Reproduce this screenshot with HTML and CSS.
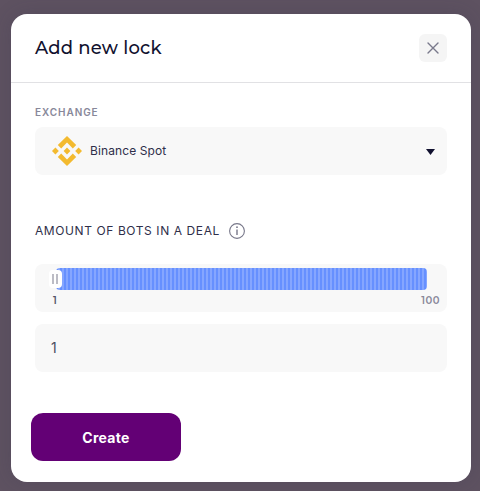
FILE: index.html
```html
<!DOCTYPE html>
<html lang="en">

<head>
    <meta charset="UTF-8">
    <meta name="viewport" content="width=device-width, initial-scale=1.0">
    <title>Add new lock</title>
    <link rel="stylesheet" href="styles.css">
</head>

<body>

    <div class="modal">
        <div class="modal-header">
            <h2 class="modal-title">Add new lock</h2>
            <button class="close-btn" type="button" aria-label="Close">
                <svg width="12" height="12" viewBox="0 0 12 12">
                    <path d="M1 1l10 10M11 1L1 11" fill="none" stroke="#79798c" stroke-width="1.4" stroke-linecap="round" />
                </svg>
            </button>
        </div>

        <div class="modal-body">
            <div class="field-label">Exchange</div>
            <div class="select">
                <svg class="coin-icon" width="30" height="30" viewBox="0 0 30 30" fill="#f3ba2f">
                    <path d="M9.2 12.4L15 6.6l5.8 5.8 3.4-3.4L15 0 5.8 9z" />
                    <path d="M0 15l3.4-3.4L6.8 15l-3.4 3.4z" />
                    <path d="M9.2 17.6l5.8 5.8 5.8-5.8 3.4 3.4L15 30l-9.2-9z" />
                    <path d="M23.2 15l3.4-3.4L30 15l-3.4 3.4z" />
                    <path d="M11.6 15l3.4-3.4 3.4 3.4-3.4 3.4z" />
                </svg>
                <span class="select-value">Binance Spot</span>
                <svg class="select-arrow" width="9" height="6" viewBox="0 0 9 6">
                    <path d="M0 0h9L4.5 6z" fill="#11112f" />
                </svg>
            </div>

            <div class="bots-title">
                <span class="bots-text">Amount of bots in a deal</span>
                <svg width="16" height="16" viewBox="0 0 16 16">
                    <circle cx="8" cy="8" r="7.4" fill="none" stroke="#777789" stroke-width="1.1" />
                    <path d="M8 6.5V12" stroke="#777789" stroke-width="1.4" />
                    <circle cx="8" cy="4.2" r="0.9" fill="#777789" />
                </svg>
            </div>

            <div class="slider">
                <div class="slider-track">
                    <span class="slider-handle"></span>
                </div>
                <div class="slider-labels">
                    <span class="current">1</span>
                    <span>100</span>
                </div>
            </div>

            <input class="amount-input" type="text" value="1" aria-label="Amount of bots">
        </div>

        <button class="create-btn" type="button">Create</button>
    </div>

</body>

</html>
```

FILE: styles.css
```css
* {
    box-sizing: border-box;
}

body {
    margin: 0;
    padding: 14px 9px 9px 11px;
    height: 491px;
    overflow: hidden;
    background-color: #5e5261;
    font-family: Inter, sans-serif;
    color: #2f2f4a;
}

.modal {
    height: 468px;
    background-color: #fff;
    border-radius: 16px;
    box-shadow: 0 0 20px rgba(50, 50, 75, 0.2);
}

.modal-header {
    display: flex;
    justify-content: space-between;
    align-items: center;
    height: 69px;
    padding: 0 24px;
    border-bottom: 1px solid #e1e1e4;
}

.modal-title {
    margin: 0;
    font-family: Montserrat, Inter, sans-serif;
    font-size: 18px;
    font-weight: 500;
    letter-spacing: 0.2px;
    color: #11112f;
}

.close-btn {
    display: flex;
    justify-content: center;
    align-items: center;
    width: 28px;
    height: 28px;
    padding: 0;
    border: none;
    border-radius: 6px;
    background-color: #f5f5f5;
    cursor: pointer;
}

.modal-body {
    padding: 23px 24px 0;
}

.field-label {
    height: 21px;
    line-height: 13px;
    font-size: 10px;
    font-weight: 600;
    letter-spacing: 0.95px;
    text-transform: uppercase;
    color: #88889a;
}

.select {
    display: flex;
    align-items: center;
    height: 48px;
    padding: 0 12px 0 17px;
    border-radius: 8px;
    background-color: #f8f8f8;
}

.select-value {
    flex: 1;
    margin-left: 8px;
    padding-bottom: 2px;
    font-size: 12px;
    letter-spacing: 0.1px;
}

.select-arrow {
    margin-top: 2px;
}

.bots-title {
    display: flex;
    align-items: center;
    gap: 9px;
    height: 16px;
    margin: 48px 0 25px;
    font-size: 12px;
    letter-spacing: 0.59px;
    text-transform: uppercase;
}

.bots-text {
    padding-bottom: 2px;
}

.slider {
    height: 48px;
    padding: 4px 7px 0 17px;
    border-radius: 8px;
    background-color: #f8f8f8;
}

.slider-track {
    position: relative;
    height: 22px;
    margin: 0 13px 0 4px;
    border-radius: 4px;
    background: repeating-linear-gradient(90deg, #6690ff 0, #6690ff 2px, #85a6ff 2px, #85a6ff 4px);
}

.slider-handle {
    position: absolute;
    top: 2px;
    left: -7px;
    display: flex;
    align-items: center;
    gap: 2px;
    width: 13px;
    height: 18px;
    padding-left: 3px;
    border-radius: 4px;
    background-color: #fff;
}

.slider-handle::before,
.slider-handle::after {
    content: "";
    width: 2px;
    height: 10px;
    background-color: #bcbcc5;
}

.slider-labels {
    display: flex;
    justify-content: space-between;
    margin-top: 4px;
    line-height: 13px;
    font-family: Montserrat, Inter, sans-serif;
    font-size: 10px;
    font-weight: 600;
    letter-spacing: 0.5px;
    color: #88889a;
}

.slider-labels .current {
    padding-left: 1px;
    color: #555568;
}

.amount-input {
    display: block;
    width: 100%;
    height: 48px;
    margin-top: 12px;
    padding: 0 16px 2px;
    border: none;
    border-radius: 8px;
    background-color: #f8f8f8;
    font-family: inherit;
    font-size: 14px;
    color: #4c4c60;
}

.create-btn {
    display: block;
    width: 150px;
    height: 48px;
    margin: 41px 0 0 20px;
    padding: 0;
    border: none;
    border-radius: 12px;
    background-color: #630075;
    font-family: inherit;
    font-size: 14px;
    font-weight: 700;
    letter-spacing: 0.3px;
    color: #fff;
    cursor: pointer;
}
```
